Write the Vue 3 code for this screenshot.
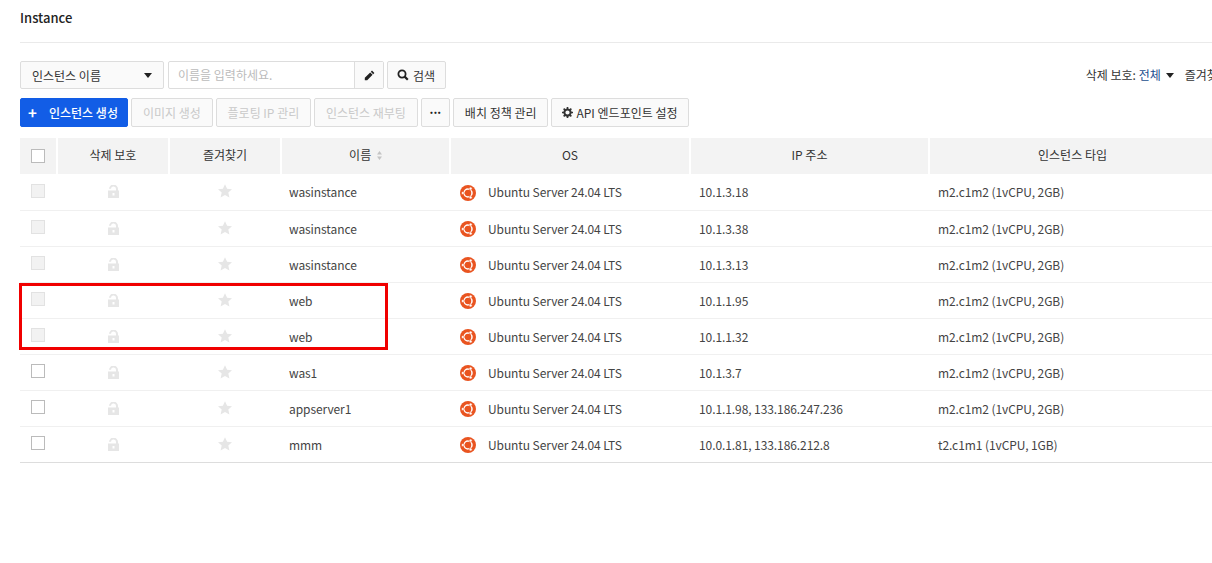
<script setup>
const rows = [
  { name: 'wasinstance', ip: '10.1.3.18', type: 'm2.c1m2 (1vCPU, 2GB)', off: true },
  { name: 'wasinstance', ip: '10.1.3.38', type: 'm2.c1m2 (1vCPU, 2GB)', off: true },
  { name: 'wasinstance', ip: '10.1.3.13', type: 'm2.c1m2 (1vCPU, 2GB)', off: true },
  { name: 'web', ip: '10.1.1.95', type: 'm2.c1m2 (1vCPU, 2GB)', off: true },
  { name: 'web', ip: '10.1.1.32', type: 'm2.c1m2 (1vCPU, 2GB)', off: true },
  { name: 'was1', ip: '10.1.3.7', type: 'm2.c1m2 (1vCPU, 2GB)', off: false },
  { name: 'appserver1', ip: '10.1.1.98, 133.186.247.236', type: 'm2.c1m2 (1vCPU, 2GB)', off: false },
  { name: 'mmm', ip: '10.0.1.81, 133.186.212.8', type: 't2.c1m1 (1vCPU, 1GB)', off: false },
]
</script>

<template>
  <div class="page">
    <h1 class="title">Instance</h1>
    <div class="divider"></div>

    <!-- search row -->
    <div class="filters">
      <div class="select">
        <span>인스턴스 이름</span>
        <i class="caret"></i>
      </div>
      <div class="search_box">
        <span class="placeholder">이름을 입력하세요.</span>
        <span class="pencil">
          <svg width="11" height="11" viewBox="0 0 11 11"><path d="M8 .6l2.4 2.4-1.2 1.2-2.4-2.4zM6.2 2.4l2.4 2.4-5.4 5.4H.8V7.8z" fill="#222"/></svg>
        </span>
      </div>
      <button class="btn search_btn">
        <svg width="12" height="12" viewBox="0 0 12 12"><circle cx="5" cy="5" r="3.6" fill="none" stroke="#222" stroke-width="1.8"/><path d="M7.6 7.6l3.2 3.2" stroke="#222" stroke-width="2.2"/></svg>
        검색
      </button>
      <div class="right_filters">
        <span>삭제 보호: <b>전체</b><i class="caret small"></i></span>
        <span>즐겨찾기: <b>전체</b><i class="caret small"></i></span>
      </div>
    </div>

    <!-- action buttons -->
    <div class="actions">
      <button class="btn primary"><span class="plus">+</span>인스턴스 생성</button>
      <button class="btn disabled">이미지 생성</button>
      <button class="btn disabled">플로팅 IP 관리</button>
      <button class="btn disabled">인스턴스 재부팅</button>
      <button class="btn more">...</button>
      <button class="btn">배치 정책 관리</button>
      <button class="btn api">
        <svg width="11" height="11" viewBox="0 0 12 12"><circle cx="6" cy="6" r="3.4" fill="none" stroke="#333" stroke-width="2.2"/><path d="M6 0v2.4M6 9.6V12M0 6h2.4M9.6 6H12M1.8 1.8l1.7 1.7M8.5 8.5l1.7 1.7M10.2 1.8L8.5 3.5M3.5 8.5l-1.7 1.7" stroke="#333" stroke-width="1.8"/></svg>
        API 엔드포인트 설정
      </button>
    </div>

    <div class="table_wrap">
      <table>
        <colgroup>
          <col style="width: 37px" />
          <col style="width: 112px" />
          <col style="width: 112px" />
          <col style="width: 169px" />
          <col style="width: 240px" />
          <col style="width: 239px" />
          <col />
        </colgroup>
        <thead>
          <tr>
            <th><span class="check"></span></th>
            <th>삭제 보호</th>
            <th>즐겨찾기</th>
            <th>
              이름
              <svg class="sort" width="5" height="9" viewBox="0 0 5 9"><path d="M2.5 0L5 3.4H0zM2.5 9L0 5.6h5z" fill="#c4c4c4"/></svg>
            </th>
            <th>OS</th>
            <th>IP 주소</th>
            <th class="last_head"><span>인스턴스 타입</span></th>
          </tr>
        </thead>
        <tbody>
          <tr v-for="(row, i) in rows" :key="i">
            <td class="center"><span class="check" :class="{ check_off: row.off }"></span></td>
            <td class="center">
              <svg class="lock" width="11" height="13" viewBox="0 0 11 13"><path d="M0 5.6h8V4.4a2.5 2.5 0 0 0-5-.6H1A4.5 4.5 0 0 1 10 4.4v1.2h1V13H0zM4.5 8v2.5h2V8z" fill-rule="evenodd" fill="#e6e6e6"/></svg>
            </td>
            <td class="center">
              <svg class="star" width="14" height="14" viewBox="0 0 14 14"><path d="M7 .2l2.1 4.5 4.9.5-3.7 3.3 1.1 4.9L7 10.9l-4.4 2.5 1.1-4.9L0 5.2l4.9-.5z" fill="#e6e6e6"/></svg>
            </td>
            <td class="name">{{ row.name }}</td>
            <td>
              <span class="os">
                <svg width="16" height="16" viewBox="0 0 16 16">
                  <circle cx="8" cy="8" r="8" fill="#e95420"/>
                  <circle cx="8" cy="8" r="4" fill="none" stroke="#fff" stroke-width="1.5"/>
                  <circle cx="2.9" cy="8" r="1.5" fill="#fff" stroke="#e95420" stroke-width=".6"/>
                  <circle cx="10.6" cy="3.6" r="1.5" fill="#fff" stroke="#e95420" stroke-width=".6"/>
                  <circle cx="10.6" cy="12.4" r="1.5" fill="#fff" stroke="#e95420" stroke-width=".6"/>
                </svg>
                Ubuntu Server 24.04 LTS
              </span>
            </td>
            <td>{{ row.ip }}</td>
            <td>{{ row.type }}</td>
          </tr>
        </tbody>
      </table>
      <!-- annotation drawn over the screenshot -->
      <div class="highlight"></div>
    </div>
  </div>
</template>

<style>
html, body {
  overflow: hidden;
  background: #fff;
}
</style>

<style scoped>
.page {
  width: 1250px;
  margin-left: 20px;
  font-family: "Noto Sans CJK KR", "Noto Sans", sans-serif;
  font-size: 12px;
  color: #333;
}

.title {
  margin: 0;
  height: 42px;
  padding-top: 9px;
  box-sizing: border-box;
  font-size: 13px;
  line-height: 18px;
  font-weight: 500;
  color: #222;
}

.divider {
  height: 1px;
  background: #eaeaea;
}

.filters {
  display: flex;
  align-items: center;
  margin-top: 18px;
  height: 28px;
}

.select {
  display: flex;
  align-items: center;
  justify-content: space-between;
  width: 144px;
  height: 28px;
  box-sizing: border-box;
  padding: 0 11px;
  border: 1px solid #ddd;
  border-radius: 2px;
  background: #fafafa;
}

.caret {
  display: inline-block;
  width: 0;
  height: 0;
  border-left: 4px solid transparent;
  border-right: 4px solid transparent;
  border-top: 5px solid #222;
}

.caret.small {
  margin-left: 5px;
  vertical-align: 2px;
}

.search_box {
  display: flex;
  width: 216px;
  height: 28px;
  box-sizing: border-box;
  margin-left: 4px;
  border: 1px solid #ddd;
  border-radius: 2px;
}

.placeholder {
  flex: 1;
  padding-left: 9px;
  line-height: 26px;
  color: #bbb;
  border-right: 1px solid #ddd;
}

.pencil {
  display: flex;
  align-items: center;
  justify-content: center;
  width: 28px;
  background: #fafafa;
}

.btn {
  display: inline-flex;
  align-items: center;
  gap: 4px;
  height: 29px;
  box-sizing: border-box;
  padding: 0 10.7px;
  border: 1px solid #ddd;
  border-radius: 2px;
  background: #fafafa;
  font: inherit;
  color: #333;
  white-space: nowrap;
}

.search_btn {
  width: 59px;
  height: 28px;
  margin-left: 3px;
  padding: 0 9px;
}

.api {
  gap: 3px;
  padding: 0 10px;
}

.right_filters {
  display: flex;
  gap: 11px;
  margin-left: auto;
  margin-top: -2px;
}

.right_filters b {
  font-weight: 400;
  color: #1c4f8f;
}

.actions {
  display: flex;
  gap: 3.3px;
  margin-top: 9px;
}

.primary {
  justify-content: flex-start;
  width: 108px;
  padding: 0 0 0 7px;
  border-color: #125de6;
  background: #125de6;
  color: #fff;
  font-weight: 500;
  gap: 0;
}

.plus {
  width: 21px;
  font-size: 15px;
  line-height: 1;
  font-weight: 700;
  text-align: left;
}

.disabled {
  color: #c9c9c9;
}

.more {
  width: 29px;
  padding: 0 0 8px;
  justify-content: center;
  color: #222;
  font-weight: 700;
  line-height: 1;
}

.table_wrap {
  position: relative;
  margin-top: 11px;
}

table {
  width: 100%;
  table-layout: fixed;
  border-collapse: collapse;
}

th {
  height: 36px;
  box-sizing: border-box;
  padding: 0 0 3px;
  background: #f3f3f3;
  border-left: 2px solid #fff;
  font-weight: 400;
  text-align: center;
  color: #333;
}

th:first-child {
  border-left: 0;
}

.last_head span {
  display: block;
  width: 285px;
}

.sort {
  margin-left: 3px;
}

td {
  height: 36px;
  box-sizing: border-box;
  padding: 0 9px;
  border-bottom: 1px solid #f0f0f0;
  color: #444;
  letter-spacing: -0.08px;
}

tbody tr:last-child td {
  border-bottom-color: #ddd;
}

.center {
  padding: 0;
  text-align: center;
}

.check {
  display: block;
  width: 14px;
  height: 14px;
  box-sizing: border-box;
  margin: -2px auto 0 11px;
  border: 1px solid #bbb;
  background: #fff;
}

th .check {
  margin-top: 3px;
}

.check_off {
  border-color: #e2e2e2;
  background: #f2f2f2;
}

.lock,
.star {
  display: block;
  margin: 0 auto;
}

.star {
  margin-top: -1px;
}

.name {
  padding-left: 8px;
}

.os {
  display: flex;
  align-items: center;
  gap: 12px;
}

.os svg {
  margin: 2px 0 0 1px;
}

.highlight {
  position: absolute;
  left: -1px;
  top: 145px;
  width: 369px;
  height: 67px;
  box-sizing: border-box;
  border: 3px solid #f00000;
}
</style>
